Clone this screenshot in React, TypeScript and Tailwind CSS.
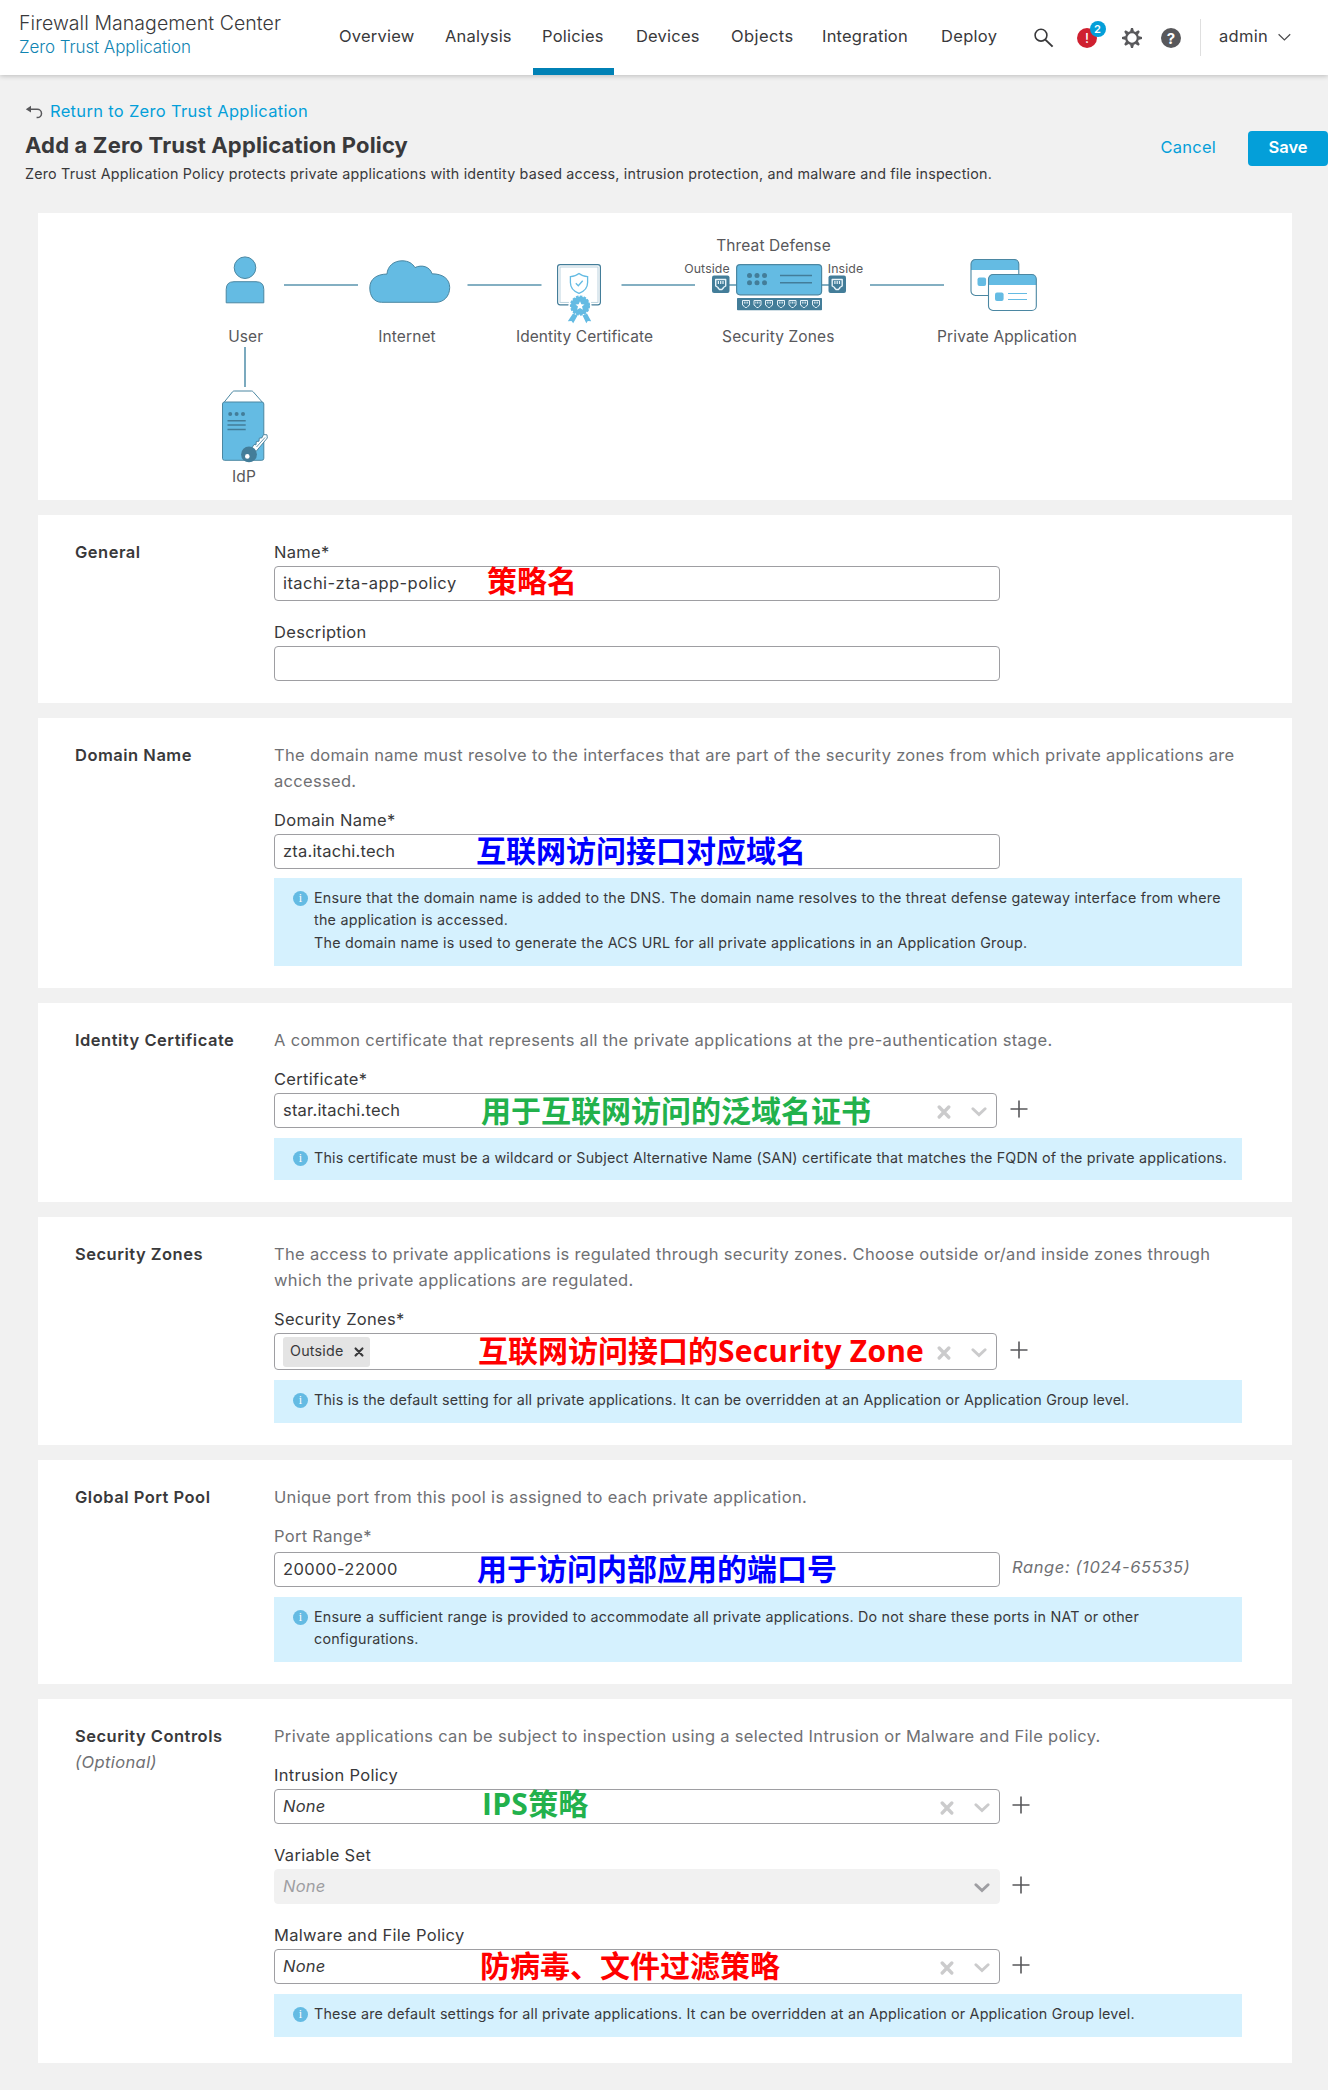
import type { ReactNode } from "react";

const INK = "text-[#39393b]";

function Header() {
  return (
    <header className="relative flex h-[75px] shrink-0 bg-white pl-[19px] shadow-[0_1px_5px_rgba(0,0,0,0.22)]">
      <div className="w-[320px] pt-[10px]">
        <div className="text-[19.5px] leading-[26px] font-light tracking-[0.06px] whitespace-nowrap text-[#39393b]">
          Firewall Management Center
        </div>
        <div className="text-[17px] leading-[22px] font-light tracking-[-0.08px] whitespace-nowrap text-[#0f84b2]">
          Zero Trust Application
        </div>
      </div>
      <nav className={"flex pt-[23px] text-[16.5px] leading-[26px] tracking-[0.2px] " + INK}>
        <span className="w-[106px]">Overview</span>
        <span className="w-[97px]">Analysis</span>
        <span className="relative w-[94px]">
          Policies
          <span className="absolute -left-[9px] top-[45px] h-[7px] w-[81px] bg-[#0081b5]" />
        </span>
        <span className="w-[95px]">Devices</span>
        <span className="w-[91px] tracking-[0.4px]">Objects</span>
        <span className="w-[119px]">Integration</span>
        <span className="w-[93px] tracking-[0.3px]">Deploy</span>
      </nav>
      <svg className="mt-[28px] h-5 w-[20px]" viewBox="0 0 20 20" fill="none" stroke="#39393b">
        <circle cx="7" cy="7.2" r="5.9" strokeWidth="1.6" />
        <path d="M11.3 11.6 18.6 18.6" strokeWidth="2" />
      </svg>
      <span className="relative mt-[28px] ml-[23px] flex h-5 w-5 items-center justify-center rounded-full bg-[#cf2030]">
        <span className="text-[13px] leading-none font-medium text-white">!</span>
        <span className="absolute -top-[7px] left-[12.5px] flex h-4 w-4 items-center justify-center rounded-full bg-[#049fd9] text-[11px] leading-none font-semibold text-white">
          2
        </span>
      </span>
      <svg className="mt-[28px] ml-[25px] h-5 w-5" viewBox="-10 -10 20 20">
        <circle r="5.8" fill="none" stroke="#58585b" strokeWidth="2.2" />
        {[0, 45, 90, 135, 180, 225, 270, 315].map((a) => (
          <path key={a} d="M-2 -6.2 -1 -10H1L2 -6.2Z" fill="#58585b" transform={`rotate(${a})`} />
        ))}
      </svg>
      <span className="mt-[28px] ml-[19px] flex h-5 w-5 items-center justify-center rounded-full bg-[#58585b] text-[15px] leading-none font-bold text-white">
        ?
      </span>
      <span className="mt-[19px] ml-[19px] h-[37px] w-px bg-[#dfdfdf]" />
      <span className={"mt-[23px] ml-[18px] w-[59px] text-[16.5px] leading-[26px] tracking-[0.3px] " + INK}>admin</span>
      <svg className="mt-[33px] h-[9px] w-[13px]" viewBox="0 0 13 9" fill="none" stroke="#4a4a4c" strokeWidth="1.2">
        <path d="M0.6 1.3 6.4 7 12.2 1.3" />
      </svg>
    </header>
  );
}

function PageHeading() {
  return (
    <div className="flex h-[138px] shrink-0 justify-between pl-[25px]">
      <div className="pt-[23px]">
        <div className="flex h-[26px] items-center">
          <svg className="mt-[2px] mr-[7px] h-[14px] w-[18px]" viewBox="0 0 18 14">
            <path d="M5 4.2H12.3A4.1 4.1 0 0 1 12.3 12.6H11.6" fill="none" stroke="#58585b" strokeWidth="1.5" />
            <path d="M0.8 4.2 6 0.8V7.6Z" fill="#58585b" />
          </svg>
          <span className="text-[16.5px] leading-[26px] tracking-[0.31px] text-[#049fd9]">Return to Zero Trust Application</span>
        </div>
        <h1 className="mt-[5px] text-[22px] leading-[32px] font-bold tracking-[0.17px] text-[#39393b]">
          Add a Zero Trust Application Policy
        </h1>
        <p className="mt-px text-[14.3px] leading-[23px] tracking-[0.195px] whitespace-nowrap text-[#39393b]">
          Zero Trust Application Policy protects private applications with identity based access, intrusion protection, and
          malware and file inspection.
        </p>
      </div>
      <div className="flex items-start pt-[56px] text-[16.5px]">
        <span className="mr-8 leading-[33px] tracking-[0.24px] text-[#049fd9]">Cancel</span>
        <span className="h-[35px] w-20 rounded-[4px] bg-[#049fd9] text-center leading-[33px] font-semibold text-white">
          Save
        </span>
      </div>
    </div>
  );
}

function Port({ x, y, s }: { x: number; y: number; s: number }) {
  return (
    <g transform={`translate(${x} ${y}) scale(${s})`} fill="none" stroke="#e8f4fa">
      <path d="M-5 -5H5V1.5L2.6 3V3.6L1.2 5H-1.2L-2.6 3.6V3L-5 1.5Z" strokeWidth="1.4" strokeLinejoin="round" />
      <path d="M-2.3 -3.4V-0.6M0 -3.4V-0.6M2.3 -3.4V-0.6" strokeWidth="1.2" />
    </g>
  );
}

function Topology() {
  return (
    <section className="h-[287px] shrink-0 bg-white">
      <svg width="1254" height="287" viewBox="38 213 1254 287" className="block">
        <g stroke="#5b95ae" strokeWidth="1.6">
          <path d="M284 285H358M467.5 285H541.5M621.5 285H695M870 285H944M245 347V387M729 285H829" />
        </g>

        <g fill="#64bbe3" stroke="#4b87a2" strokeWidth="1">
          <circle cx="245" cy="267.7" r="10.8" />
          <path d="M226.2 302.8V289.5Q226.2 281.7 234 281.7H256Q263.8 281.7 263.8 289.5V302.8Z" />
          <path d="M381.5 302.3C374 302.3 369.8 296 369.8 288C369.8 279 376.5 274.3 387 274C387.5 266 394 260.8 402 260.8C408.5 260.8 412.5 263.5 415 267.6C421.5 264.3 430 266.5 432 273.8C443 273.8 449.7 279 449.7 287.5C449.7 296.5 443.5 302.3 436 302.3Z" />
        </g>

        <g fill="none" stroke="#437d99">
          <rect x="557.6" y="264.6" width="42.8" height="40.2" rx="2.5" strokeWidth="1.2" fill="#fff" />
          <rect x="560" y="267" width="38" height="35.4" strokeWidth="0.9" stroke="#b5cfdb" />
        </g>
        <path
          d="M579 273.6C581.5 275.7 584.5 276.5 587.6 276.6V282.5C587.6 287.5 584 291.5 579 293.3C574 291.5 570.4 287.5 570.4 282.5V276.6C573.5 276.5 576.5 275.7 579 273.6Z"
          fill="none"
          stroke="#64bbe3"
          strokeWidth="1.3"
        />
        <path d="M575.8 283.2 578.3 285.7 582.7 280.8" fill="none" stroke="#64bbe3" strokeWidth="1.3" />
        <circle cx="580" cy="305.6" r="11.6" fill="#fff" />
        <path
          d="M573 313.5 567.8 321.3 571.5 321 573.2 323.2 577.6 315.5ZM587 313.5 591.2 321.3 587.8 321 586.3 323.2 582.6 315.5Z"
          fill="#64bbe3"
        />
        <circle cx="580" cy="305.6" r="9.2" fill="#64bbe3" stroke="#64bbe3" strokeWidth="1.8" strokeDasharray="2.6 1.3" />
        <path
          d="M580 301.2 581.3 304.3 584.5 304.5 582 306.6 582.9 309.8 580 308 577.1 309.8 578 306.6 575.5 304.5 578.7 304.3Z"
          fill="#fff"
        />

        <path
          d="M224.3 402 232.5 391.8Q233.2 391 234.2 391H251.5Q252.5 391 253.2 391.8L262.2 402"
          fill="#fff"
          stroke="#4b87a2"
        />
        <rect x="222.5" y="402" width="41.3" height="58.3" rx="2" fill="#64bbe3" stroke="#4b87a2" />
        <g fill="#437d99">
          <circle cx="230.2" cy="414" r="2" />
          <circle cx="236.6" cy="414" r="2" />
          <circle cx="243" cy="414" r="2" />
        </g>
        <path d="M227.5 420.8H245.7M227.5 425H245.7M227.5 429.5H245.7" stroke="#437d99" strokeWidth="1.5" />
        <path
          d="M251.5 448.5 254 444.5 256 444.8 256.3 441.5 259 441.2 259.3 438.2 262 437.8 263.5 434.6 267 434.8 267.3 438 256 451.5Z"
          fill="#fff"
          stroke="#437d99"
          strokeWidth="0.9"
        />
        <path d="M256.5 447 265 437.5" stroke="#437d99" strokeWidth="0.8" />
        <circle cx="249" cy="454.4" r="7.9" fill="#437d99" />
        <circle cx="247.3" cy="456.4" r="2.3" fill="#fff" />

        <rect x="736.6" y="264.6" width="85" height="30.2" rx="3.5" fill="#64bbe3" stroke="#4b87a2" strokeWidth="1.2" />
        <g fill="#437d99">
          {[749.5, 757, 764.5].map((x) => (
            <g key={x}>
              <circle cx={x} cy="275.5" r="2.5" />
              <circle cx={x} cy="282.7" r="2.5" />
            </g>
          ))}
          <rect x="737" y="298" width="85" height="12.3" rx="0.8" />
          <rect x="712" y="275.5" width="17.5" height="17.5" rx="2" />
          <rect x="828.5" y="275.5" width="17.5" height="17.5" rx="2" />
        </g>
        <path d="M780 275.5H812M780 282.7H812" stroke="#437d99" strokeWidth="1.6" />
        <Port x={720.7} y={284.5} s={1} />
        <Port x={837.2} y={284.5} s={1} />
        {[746, 757.5, 769, 781, 792.5, 804, 816].map((x) => (
          <Port key={x} x={x} y={304} s={0.7} />
        ))}

        {[
          [971, 259.5],
          [988.5, 274.5],
        ].map(([x, y]) => (
          <g key={x} transform={`translate(${x} ${y})`}>
            <rect x="0" y="0" width="47.8" height="36" rx="4.5" fill="#fff" />
            <path d="M0 10.5V4.5A4.5 4.5 0 0 1 4.5 0H43.3A4.5 4.5 0 0 1 47.8 4.5V10.5Z" fill="#64bbe3" />
            <rect x="0" y="0" width="47.8" height="36" rx="4.5" fill="none" stroke="#4b87a2" strokeWidth="1.1" />
            <rect x="6.5" y="18" width="8.6" height="8.6" rx="2" fill="#64bbe3" />
            <path d="M19.5 19H38.5M19.5 25H38.5" stroke="#64bbe3" strokeWidth="1.2" />
          </g>
        ))}

        <g fill="#58585b" fontFamily="Inter, sans-serif" fontSize="15.5" textAnchor="middle" letterSpacing="0.12">
          <text x="245.7" y="342">User</text>
          <text x="407" y="342">Internet</text>
          <text x="584.5" y="342" letterSpacing="0.08">Identity Certificate</text>
          <text x="778.3" y="342">Security Zones</text>
          <text x="1007" y="342">Private Application</text>
          <text x="773.5" y="251.3">Threat Defense</text>
          <text x="244" y="482">IdP</text>
          <text x="707" y="273" fontSize="12.3">Outside</text>
          <text x="845.5" y="273" fontSize="12.3">Inside</text>
        </g>
      </svg>
    </section>
  );
}

function Section({
  title,
  note,
  last,
  children,
}: {
  title: string;
  note?: string;
  last?: boolean;
  children: ReactNode;
}) {
  return (
    <section className={"mt-[15px] flex shrink-0 bg-white pt-6 pl-[37px] " + (last ? "pb-[26px]" : "pb-[22px]")}>
      <div className="w-[199px] shrink-0 leading-[26px]">
        <h2 className="text-[16.5px] font-semibold tracking-[0.5px] text-[#39393b]">{title}</h2>
        {note && <p className="text-[16.5px] tracking-[0.4px] text-[#6f7073] italic">{note}</p>}
      </div>
      <div className="w-[968px]">{children}</div>
    </section>
  );
}

function Desc({ lines }: { lines: string[] }) {
  return (
    <div className="mb-[13px] text-[16.5px] leading-[26px] tracking-[0.31px] whitespace-nowrap text-[#6f7073]">
      {lines.map((l) => (
        <p key={l}>{l}</p>
      ))}
    </div>
  );
}

function Label({ children, muted }: { children: ReactNode; muted?: boolean }) {
  return (
    <div
      className={
        "text-[16.5px] leading-[26px] tracking-[0.3px] " + (muted ? "mb-[3px] text-[#6f7073]" : "mb-px text-[#39393b]")
      }
    >
      {children}
    </div>
  );
}

function Annotation({ className, children }: { className: string; children: ReactNode }) {
  return (
    <span
      className={
        "absolute z-10 font-['Noto_Sans_CJK_SC',sans-serif] text-[30px] leading-[30px] font-bold tracking-normal whitespace-nowrap " +
        className
      }
    >
      {children}
    </span>
  );
}

function Chevron({ className }: { className: string }) {
  return (
    <svg className={"h-[10px] w-4 " + className} viewBox="0 0 16 10" fill="none" stroke="currentColor" strokeWidth="2.9">
      <path d="M1.9 1.8 8 7.6 14.1 1.8" strokeLinecap="round" />
    </svg>
  );
}

function Cross({ className, w }: { className: string; w: string }) {
  return (
    <svg className={className} viewBox="0 0 14 14" fill="none" stroke="currentColor" strokeWidth={w}>
      <path d="M2.2 2 11.8 12M11.8 2 2.2 12" strokeLinecap="round" />
    </svg>
  );
}

function Plus({ className }: { className: string }) {
  return (
    <svg className={"mb-[4px] h-[18px] w-[18px] " + className} viewBox="0 0 18 18" stroke="#58585b" strokeWidth="1.6">
      <path d="M0.5 9H17.5M9 0.5V17.5" />
    </svg>
  );
}

function Field({ value, note, hint, tight }: { value?: string; note?: ReactNode; hint?: string; tight?: boolean }) {
  return (
    <div className="flex items-center">
      <div
        className={
          "relative flex h-[35px] w-[726px] shrink-0 items-center rounded-[4px] border border-[#9e9ea2] bg-white pl-[8px] text-[16.5px] text-[#39393b] " +
          (tight ? "tracking-[0.2px]" : "tracking-[0.44px]")
        }
      >
        {value}
        {note}
      </div>
      {hint && (
        <span className="-mt-1 ml-[12px] text-[16.5px] tracking-[0.6px] whitespace-nowrap text-[#6f7073] italic">{hint}</span>
      )}
    </div>
  );
}

function Select({
  children,
  note,
  wide,
  tall,
  disabled,
  italic,
}: {
  children: ReactNode;
  note?: ReactNode;
  wide?: boolean;
  tall?: boolean;
  disabled?: boolean;
  italic?: boolean;
}) {
  return (
    <div className="flex items-center">
      <div
        className={
          "relative flex shrink-0 items-center rounded-[4px] border pl-[8px] text-[16.5px] tracking-[0.2px] " +
          (wide ? "w-[726px] " : "w-[723px] ") +
          (tall ? "h-[37px] " : "h-[35px] ") +
          (italic ? "italic " : "") +
          (disabled ? "border-[#f1f1f1] bg-[#f1f1f1] text-[#9e9ea2]" : "border-[#9e9ea2] bg-white text-[#39393b]")
        }
      >
        {children}
        {note}
        <span className="ml-auto flex items-center pt-[2px] pr-[9px]">
          {!disabled && <Cross className="mr-[20px] h-[14px] w-[14px] text-[#cbcbcc]" w="3.3" />}
          <Chevron className={disabled ? "text-[#9e9ea2]" : "text-[#cbcbcc]"} />
        </span>
      </div>
      <Plus className={wide ? "ml-[11.5px]" : "ml-[13px]"} />
    </div>
  );
}

function Info({ lines, box }: { lines: string[]; box: string }) {
  return (
    <div className={"flex bg-[#d5f1fe] pt-[8.5px] pl-[19px] text-[14.3px] " + box}>
      <span className="mt-[4px] flex h-[15px] w-[15px] shrink-0 items-center justify-center rounded-full bg-[#64bbe3] font-['Liberation_Serif',serif] text-[12px] leading-none tracking-normal text-white">
        i
      </span>
      <div className="ml-[6px] leading-[22.5px] whitespace-nowrap text-[#39393b]">
        {lines.map((l) => (
          <p key={l}>{l}</p>
        ))}
      </div>
    </div>
  );
}

export default function App() {
  return (
    <div className="flex h-[2090px] w-[1328px] flex-col overflow-hidden bg-[#f1f1f1] font-['Inter',sans-serif]">
      <Header />
      <PageHeading />
      <main className="ml-[38px] flex w-[1254px] flex-col">
        <Topology />

        <Section title="General">
          <Label>Name*</Label>
          <Field
            value="itachi-zta-app-policy"
            note={<Annotation className="-top-[3px] left-[212px] text-[#ff0000]">策略名</Annotation>}
          />
          <div className="h-[18px]" />
          <Label>Description</Label>
          <Field />
        </Section>

        <Section title="Domain Name">
          <Desc
            lines={[
              "The domain name must resolve to the interfaces that are part of the security zones from which private applications are",
              "accessed.",
            ]}
          />
          <Label>Domain Name*</Label>
          <Field
            tight
            value="zta.itachi.tech"
            note={<Annotation className="-top-px left-[201px] text-[#0000ff]">互联网访问接口对应域名</Annotation>}
          />
          <Info
            box="mt-[9px] h-[88px] tracking-[0.24px]"
            lines={[
              "Ensure that the domain name is added to the DNS. The domain name resolves to the threat defense gateway interface from where",
              "the application is accessed.",
              "The domain name is used to generate the ACS URL for all private applications in an Application Group.",
            ]}
          />
        </Section>

        <Section title="Identity Certificate">
          <Desc
            lines={["A common certificate that represents all the private applications at the pre-authentication stage."]}
          />
          <Label>Certificate*</Label>
          <Select
            note={<Annotation className="top-0 left-[206px] text-[#22b14c]">用于互联网访问的泛域名证书</Annotation>}
          >
            star.itachi.tech
          </Select>
          <Info
            box="mt-[10px] h-[42px] tracking-[0.19px]"
            lines={[
              "This certificate must be a wildcard or Subject Alternative Name (SAN) certificate that matches the FQDN of the private applications.",
            ]}
          />
        </Section>

        <Section title="Security Zones">
          <Desc
            lines={[
              "The access to private applications is regulated through security zones. Choose outside or/and inside zones through",
              "which the private applications are regulated.",
            ]}
          />
          <Label>Security Zones*</Label>
          <Select
            tall
            note={
              <Annotation className="top-0 left-[203px] text-[#ff0000]">
                互联网访问接口的<span className="font-['Open_Sans',sans-serif] tracking-[0.2px]">Security Zone</span>
              </Annotation>
            }
          >
            <span className="flex h-[30px] w-[87px] items-center rounded-[3px] bg-[#e4e4e4] pb-px pl-[7px] text-[14.3px]">
              Outside
              <Cross className="mt-[2px] ml-[11px] h-[10px] w-[10px] text-[#39393b]" w="3" />
            </span>
          </Select>
          <Info
            box="mt-[10px] h-[43px] tracking-[0.19px]"
            lines={[
              "This is the default setting for all private applications. It can be overridden at an Application or Application Group level.",
            ]}
          />
        </Section>

        <Section title="Global Port Pool">
          <Desc lines={["Unique port from this pool is assigned to each private application."]} />
          <Label muted>Port Range*</Label>
          <Field
            value="20000-22000"
            hint="Range: (1024-65535)"
            note={<Annotation className="-top-px left-[202px] text-[#0000ff]">用于访问内部应用的端口号</Annotation>}
          />
          <Info
            box="mt-[10px] h-[65px] tracking-[0.21px]"
            lines={[
              "Ensure a sufficient range is provided to accommodate all private applications. Do not share these ports in NAT or other",
              "configurations.",
            ]}
          />
        </Section>

        <Section title="Security Controls" note="(Optional)" last>
          <Desc
            lines={["Private applications can be subject to inspection using a selected Intrusion or Malware and File policy."]}
          />
          <Label>Intrusion Policy</Label>
          <Select
            wide
            italic
            note={
              <Annotation className="-top-[3px] left-[207px] text-[#22b14c] not-italic">
                <span className="font-['Open_Sans',sans-serif] tracking-[0.3px]">IPS</span>策略
              </Annotation>
            }
          >
            None
          </Select>
          <div className="h-[18px]" />
          <Label>Variable Set</Label>
          <Select wide italic disabled>
            None
          </Select>
          <div className="h-[18px]" />
          <Label>Malware and File Policy</Label>
          <Select
            wide
            italic
            note={
              <Annotation className="-top-px left-[205px] text-[#ff0000] not-italic">防病毒、文件过滤策略</Annotation>
            }
          >
            None
          </Select>
          <Info
            box="mt-[10px] h-[43px] tracking-[0.19px]"
            lines={[
              "These are default settings for all private applications. It can be overridden at an Application or Application Group level.",
            ]}
          />
        </Section>
      </main>
    </div>
  );
}
